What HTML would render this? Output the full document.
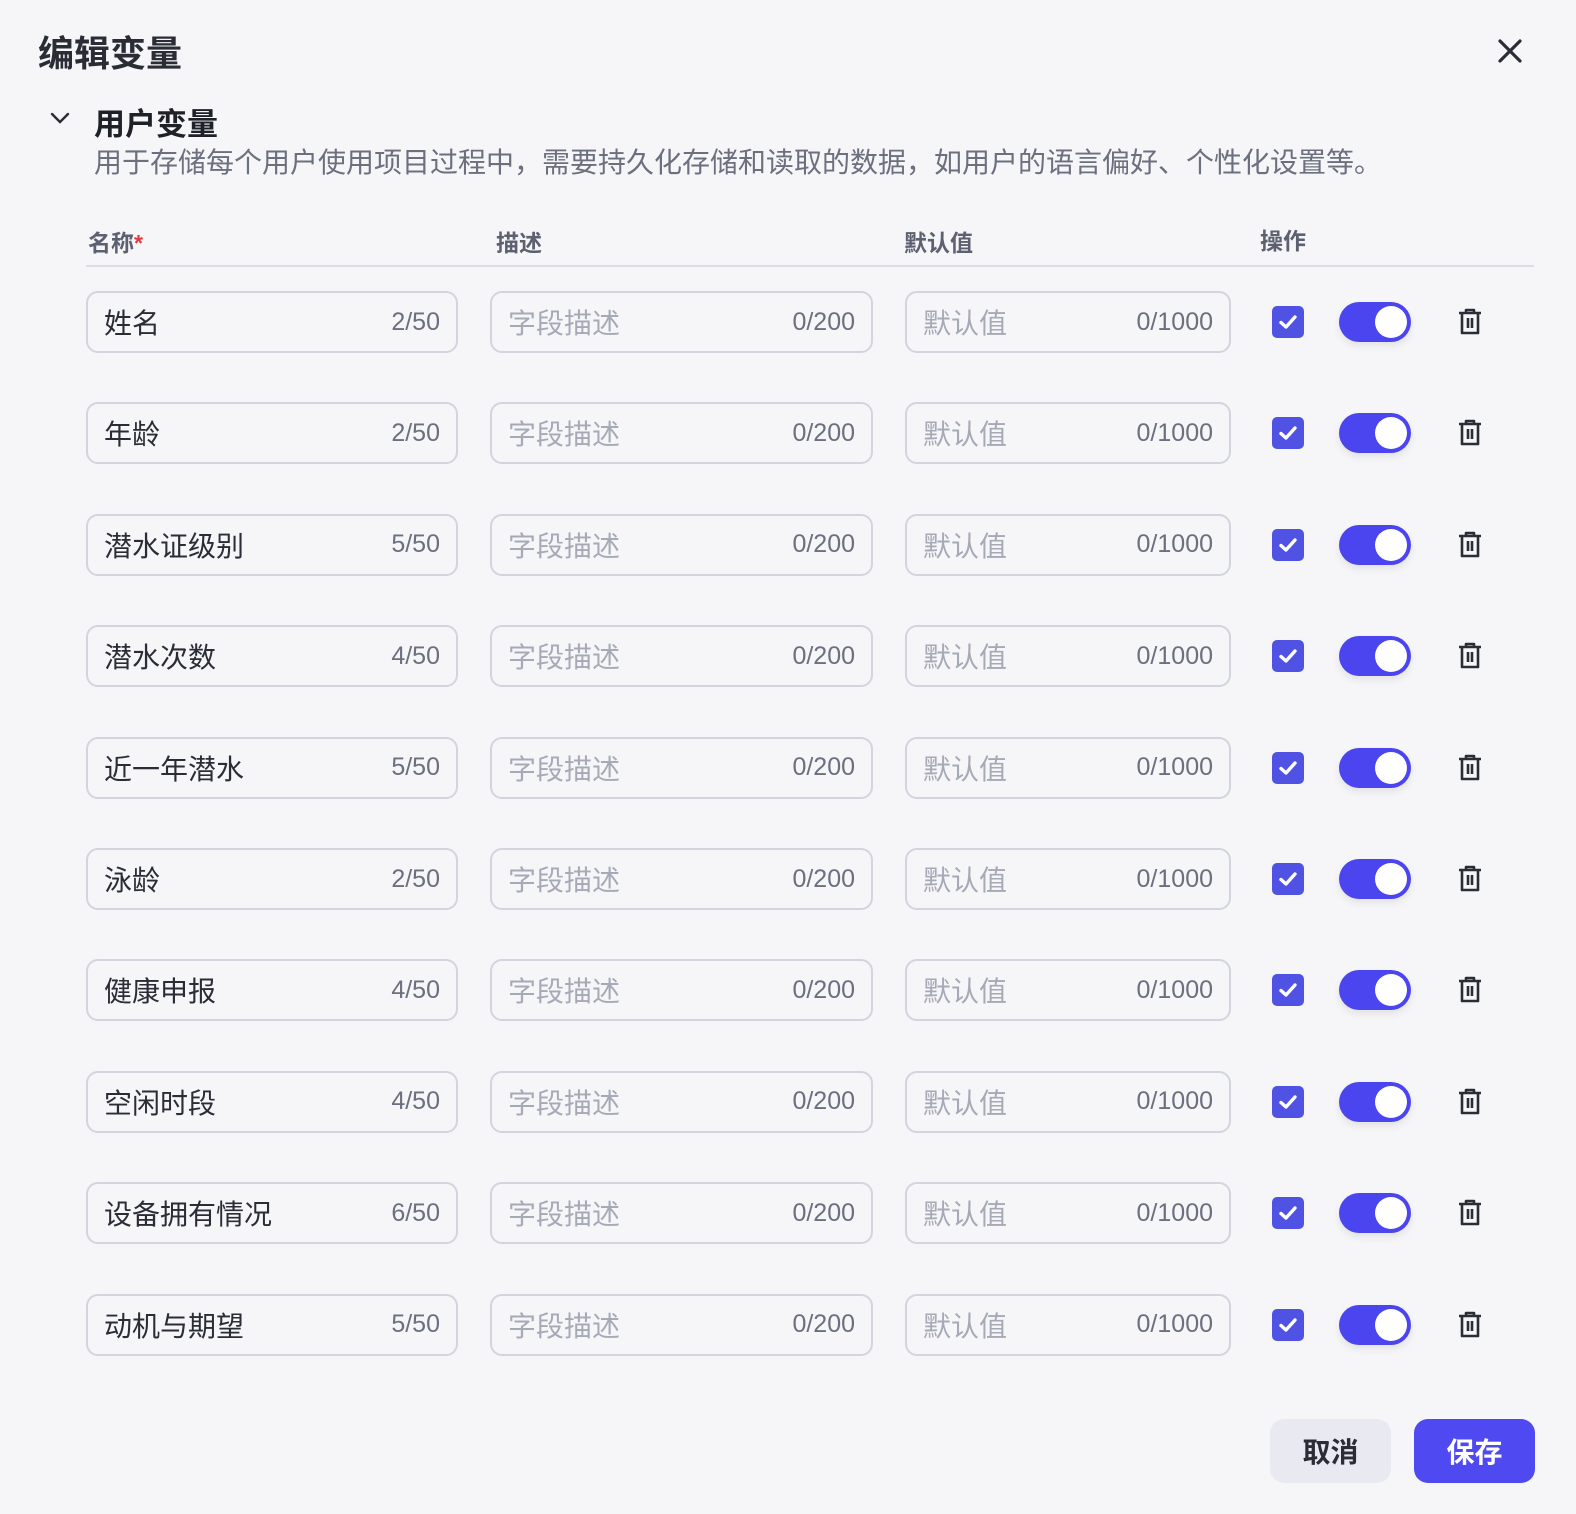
<!DOCTYPE html>
<html><head><meta charset="utf-8"><style>
*{box-sizing:border-box;margin:0;padding:0}
body{width:1576px;height:1514px;background:#f6f6f9;font-family:"Liberation Sans","Noto Sans CJK SC",sans-serif;position:relative;overflow:hidden}
.a{position:absolute}
.title{left:38px;top:25px;font-size:36px;font-weight:700;color:#2b2d36}
.sec{left:94px;top:99px;font-size:31px;font-weight:700;color:#1f2129}
.desc{left:94px;top:141px;font-size:28px;color:#6b6f7e}
.th{top:224px;font-size:23px;font-weight:700;color:#5c6070}
.line{left:86px;top:265px;width:1448px;height:2px;background:#dcdde3}
.box{height:62px;border:2px solid #d3d5de;border-radius:12px;font-size:28px;display:flex;align-items:center;justify-content:space-between;padding:0 16px;background:#f6f6f9}
.box .t{color:#2b2d36}.box .p{color:#a6a9b6}.box .c{color:#6b6f7e;font-size:25px}
.cb{width:32px;height:32px;border-radius:5px;background:#4f52e2}
.tg{width:72px;height:40px;border-radius:20px;background:#4b45f0;box-shadow:0 4px 8px rgba(0,0,0,.08)}
.tg:after{content:"";position:absolute;right:4px;top:4px;width:32px;height:32px;border-radius:50%;background:#fff}
.btn{top:1419px;height:64px;width:121px;border-radius:14px;font-size:28px;font-weight:700;display:flex;align-items:center;justify-content:center}
</style></head><body>
<div class="a title">编辑变量</div>
<svg class="a" style="left:1497px;top:38px" width="26" height="26" viewBox="0 0 26 26"><path d="M3 3L23 23M23 3L3 23" stroke="#2b2d36" stroke-width="3.2" stroke-linecap="round"/></svg>
<svg class="a" style="left:49px;top:110px" width="22" height="16" viewBox="0 0 22 16"><path d="M3 4L11 12L19 4" stroke="#2b2d36" stroke-width="2.4" fill="none" stroke-linecap="round"/></svg>
<div class="a sec">用户变量</div>
<div class="a desc">用于存储每个用户使用项目过程中，需要持久化存储和读取的数据，如用户的语言偏好、个性化设置等。</div>
<div class="a th" style="left:88px">名称<span style="color:#e0393e">*</span></div>
<div class="a th" style="left:496px">描述</div>
<div class="a th" style="left:904px">默认值</div>
<div class="a th" style="left:1260px;top:222px">操作</div>
<div class="a line"></div>
<div id="rows"></div>
<div class="a btn" style="left:1270px;background:#e9e9f1;color:#2b2d36">取消</div>
<div class="a btn" style="left:1414px;background:#4f49f2;color:#fff">保存</div>
<script>
var n=[["姓名",2],["年龄",2],["潜水证级别",5],["潜水次数",4],["近一年潜水",5],["泳龄",2],["健康申报",4],["空闲时段",4],["设备拥有情况",6],["动机与期望",5]];
var h="";
n.forEach(function(r,i){var y=291+i*111.4;var c=y+31;
h+='<div class="a box" style="left:86px;top:'+y+'px;width:372px"><span class="t">'+r[0]+'</span><span class="c">'+r[1]+'/50</span></div>';
h+='<div class="a box" style="left:490px;top:'+y+'px;width:383px"><span class="p">字段描述</span><span class="c">0/200</span></div>';
h+='<div class="a box" style="left:905px;top:'+y+'px;width:326px"><span class="p">默认值</span><span class="c">0/1000</span></div>';
h+='<div class="a cb" style="left:1272px;top:'+(c-16)+'px"><svg width="32" height="32" viewBox="0 0 32 32"><path d="M9 16.5L14 21L23 11" stroke="#fff" stroke-width="3.4" fill="none" stroke-linecap="round" stroke-linejoin="round"/></svg></div>';
h+='<div class="a tg" style="left:1339px;top:'+(c-20)+'px"></div>';
h+='<svg class="a" style="left:1457px;top:'+(c-14)+'px" width="26" height="28" viewBox="0 0 26 28"><path d="M2 5H24M9 5V2H17V5M5 5V25H21V5M11 10V20M15 10V20" stroke="#2b2d36" stroke-width="2.6" fill="none" stroke-linejoin="round"/></svg>';
});
document.getElementById("rows").innerHTML=h;
</script>
</body></html>
